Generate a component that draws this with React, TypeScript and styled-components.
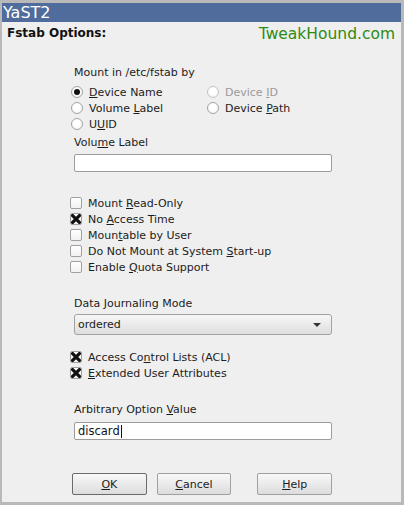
import React from 'react';
import { styled, createGlobalStyle } from 'styled-components';

const GlobalStyle = createGlobalStyle`
  html, body {
    margin: 0;
    padding: 0;
    background: #efefef;
  }
  body {
    font-family: "DejaVu Sans", "Liberation Sans", sans-serif;
  }
`;

const Window = styled.div`
  width: 404px;
  height: 505px;
  box-sizing: border-box;
  border-style: solid;
  border-color: #b9b9b9;
  border-width: 3px 3px 3px 2px;
  background: #efefef;
  display: flex;
  flex-direction: column;
  overflow: hidden;
`;

const TitleBar = styled.div`
  height: 19px;
  line-height: 19px;
  background: #4f6c9d;
  color: #ffffff;
  font-size: 16px;
  padding-left: 1px;
`;

const Header = styled.div`
  height: 22px;
  display: flex;
  align-items: center;
  justify-content: space-between;
  padding: 0 6px 0 5px;
`;

const Heading = styled.span`
  font-size: 12px;
  font-weight: bold;
  color: #111;
`;

const Brand = styled.span`
  font-size: 15.5px;
  color: #2f8a14;
  margin-top: 2px;
`;

const Form = styled.div`
  margin-left: 68px;
  width: 262px;
  display: flex;
  flex-direction: column;
  font-size: 11px;
  color: #1c1c1c;
`;

const Caption = styled.div<{ $top: number }>`
  margin: ${(p) => p.$top}px 0 0 4px;
  height: 16px;
  line-height: 16px;
`;

const Key = styled.span`
  text-decoration: underline;
  text-underline-offset: 1px;
`;

const RadioGrid = styled.div`
  margin: 3px 0 0 1px;
  display: grid;
  grid-template-columns: 136px 1fr;
  grid-auto-rows: 16px;
`;

const Option = styled.label<{ $disabled?: boolean }>`
  display: flex;
  align-items: center;
  gap: 6px;
  color: ${(p) => (p.$disabled ? '#9a9a9a' : 'inherit')};
`;

const RadioDot = styled.span<{ $on?: boolean; $disabled?: boolean }>`
  width: 12px;
  height: 12px;
  box-sizing: border-box;
  border-radius: 50%;
  border: 1px solid ${(p) => (p.$disabled ? '#c4c4c4' : '#a3a3a3')};
  background: radial-gradient(circle at 50% 40%, #ffffff 40%, #ececec 100%);
  display: flex;
  align-items: center;
  justify-content: center;
  flex: none;
  &::after {
    content: '';
    display: ${(p) => (p.$on ? 'block' : 'none')};
    width: 6px;
    height: 6px;
    border-radius: 50%;
    background: #111;
  }
`;

const Field = styled.div<{ $top: number; $height: number }>`
  margin: ${(p) => p.$top}px 0 0 4px;
  height: ${(p) => p.$height}px;
  box-sizing: border-box;
  border: 1px solid #9c9c9c;
  border-radius: 2px;
  background: #ffffff;
  display: flex;
  align-items: center;
  padding-left: 3px;
  font-size: 11.5px;
  color: #111;
`;

const Caret = styled.span`
  width: 1px;
  height: 13px;
  background: #111;
  margin-left: 1px;
`;

const CheckList = styled.div<{ $top: number }>`
  margin-top: ${(p) => p.$top}px;
  display: flex;
  flex-direction: column;
`;

const CheckRow = styled.label`
  height: 16px;
  display: flex;
  align-items: center;
  gap: 6px;
`;

const Box = styled.span`
  width: 12px;
  height: 12px;
  box-sizing: border-box;
  border: 1px solid #a0a0a0;
  border-radius: 2px;
  background: linear-gradient(#ffffff, #f1f1f1);
  display: flex;
  align-items: center;
  justify-content: center;
  flex: none;
`;

const Combo = styled.div`
  margin: 2px 0 0 4px;
  height: 21px;
  box-sizing: border-box;
  border: 1px solid #a2a2a2;
  border-radius: 3px;
  background: linear-gradient(#f7f7f7, #dedede);
  display: flex;
  align-items: center;
  justify-content: space-between;
  padding: 0 10px 0 3px;
  font-size: 11px;
`;

const Arrow = styled.span`
  width: 0;
  height: 0;
  border-left: 4px solid transparent;
  border-right: 4px solid transparent;
  border-top: 4px solid #333;
`;

const ButtonRow = styled.div`
  margin: 33px 0 0 4px;
  display: flex;
  gap: 10px;
  margin-left: 2px;
`;

const Button = styled.button<{ $default?: boolean; $push?: boolean }>`
  width: 75px;
  height: 22px;
  margin-left: ${(p) => (p.$push ? '16px' : '0')};
  box-sizing: border-box;
  border: 1px solid ${(p) => (p.$default ? '#6b6b6b' : '#a0a0a0')};
  border-radius: 2px;
  background: linear-gradient(#f9f9f9, #dcdcdc);
  font-family: "DejaVu Sans", "Liberation Sans", sans-serif;
  font-size: 11px;
  color: #1c1c1c;
  padding: 0;
`;

const Cross = () => (
  <svg width="10" height="10" viewBox="0 0 10 10">
    <path d="M1.6 1.6 L8.4 8.4 M8.4 1.6 L1.6 8.4" stroke="#111" strokeWidth="3.2" strokeLinecap="square" />
  </svg>
);

const Check: React.FC<{ on?: boolean; children: React.ReactNode }> = ({ on, children }) => (
  <CheckRow>
    <Box>{on && <Cross />}</Box>
    <span>{children}</span>
  </CheckRow>
);

const Radio: React.FC<{ on?: boolean; disabled?: boolean; children: React.ReactNode }> = ({ on, disabled, children }) => (
  <Option $disabled={disabled}>
    <RadioDot $on={on} $disabled={disabled} />
    <span>{children}</span>
  </Option>
);

const App: React.FC = () => {
  return (
    <Window>
      <GlobalStyle />
      <TitleBar>YaST2</TitleBar>
      <Header>
        <Heading>Fstab Options:</Heading>
        <Brand>TweakHound.com</Brand>
      </Header>

      <Form>
        <Caption $top={21}>Mount in /etc/fstab by</Caption>
        <RadioGrid>
          <Radio on><Key>D</Key>evice Name</Radio>
          <Radio disabled>Device <Key>I</Key>D</Radio>
          <Radio>Volume <Key>L</Key>abel</Radio>
          <Radio>Device <Key>P</Key>ath</Radio>
          <Radio>U<Key>U</Key>ID</Radio>
        </RadioGrid>

        <Caption $top={3}>Volu<Key>m</Key>e Label</Caption>
        <Field $top={3} $height={18} />

        <CheckList $top={23}>
          <Check>Mount <Key>R</Key>ead-Only</Check>
          <Check on>No <Key>A</Key>ccess Time</Check>
          <Check>Moun<Key>t</Key>able by User</Check>
          <Check>Do Not Mount at System <Key>S</Key>tart-up</Check>
          <Check>Enable <Key>Q</Key>uota Support</Check>
        </CheckList>

        <Caption $top={21}>Data <Key>J</Key>ournaling Mode</Caption>
        <Combo>
          <span>ordered</span>
          <Arrow />
        </Combo>

        <CheckList $top={14}>
          <Check on>Access Co<Key>n</Key>trol Lists (ACL)</Check>
          <Check on><Key>E</Key>xtended User Attributes</Check>
        </CheckList>

        <Caption $top={21}>Arbitrary Option <Key>V</Key>alue</Caption>
        <Field $top={4} $height={18}>
          discard<Caret />
        </Field>

        <ButtonRow>
          <Button $default><Key>O</Key>K</Button>
          <Button><Key>C</Key>ancel</Button>
          <Button $push><Key>H</Key>elp</Button>
        </ButtonRow>
      </Form>
    </Window>
  );
};

export default App;
